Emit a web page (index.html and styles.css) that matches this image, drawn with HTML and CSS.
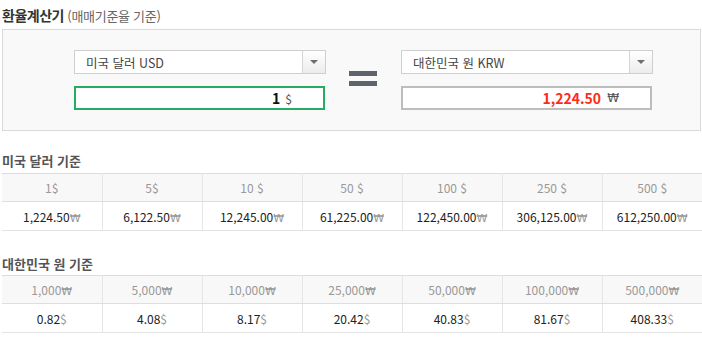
FILE: index.html
```html
<!DOCTYPE html>
<html lang="ko">
<head>
<meta charset="utf-8">
<link rel="stylesheet" href="styles.css">
</head>
<body>
<div class="page">
  <h2 class="title">환율계산기 <span class="sub">(매매기준율 기준)</span></h2>
  <div class="calc">
    <div class="group">
      <div class="select"><span class="sel-text">미국 달러 USD</span><span class="arrow"><i></i></span></div>
      <div class="input active"><span class="val">1</span><span class="unit">$</span></div>
    </div>
    <div class="equals"><i></i><i></i></div>
    <div class="group">
      <div class="select"><span class="sel-text">대한민국 원 KRW</span><span class="arrow"><i></i></span></div>
      <div class="input"><span class="val red">1,224.50</span><span class="unit won">₩</span></div>
    </div>
  </div>

  <h3 class="sec">미국 달러 기준</h3>
  <table class="rates">
    <tr class="head"><td>1$</td><td>5$</td><td>10 $</td><td>50 $</td><td>100 $</td><td>250 $</td><td>500 $</td></tr>
    <tr><td>1,224.50<span class="c w">₩</span></td><td>6,122.50<span class="c w">₩</span></td><td>12,245.00<span class="c w">₩</span></td><td>61,225.00<span class="c w">₩</span></td><td>122,450.00<span class="c w">₩</span></td><td>306,125.00<span class="c w">₩</span></td><td>612,250.00<span class="c w">₩</span></td></tr>
  </table>

  <h3 class="sec sec2">대한민국 원 기준</h3>
  <table class="rates">
    <tr class="head"><td>1,000<span class="w">₩</span></td><td>5,000<span class="w">₩</span></td><td>10,000<span class="w">₩</span></td><td>25,000<span class="w">₩</span></td><td>50,000<span class="w">₩</span></td><td>100,000<span class="w">₩</span></td><td>500,000<span class="w">₩</span></td></tr>
    <tr><td>0.82<span class="c">$</span></td><td>4.08<span class="c">$</span></td><td>8.17<span class="c">$</span></td><td>20.42<span class="c">$</span></td><td>40.83<span class="c">$</span></td><td>81.67<span class="c">$</span></td><td>408.33<span class="c">$</span></td></tr>
  </table>
</div>
</body>
</html>
```
FILE: styles.css
```css
* { box-sizing: border-box; }
body {
  margin: 0;
  background: #fff;
  font-family: "Noto Sans CJK KR", "Noto Sans", sans-serif;
  font-size: 12px;
  color: #222;
}
.page { padding-left: 2px; width: 702px; }
.title {
  margin: 0;
  height: 29px;
  padding-top: 6px;
  font-size: 14px;
  line-height: 18px;
  font-weight: bold;
  color: #333;
  letter-spacing: -0.5px;
}
.title .sub { font-weight: normal; color: #666; font-size: 13px; letter-spacing: -0.3px; }
.calc {
  width: 699px;
  height: 102px;
  border: 1px solid #d9d9d9;
  background: #f9f9f9;
  display: flex;
  padding: 20px 0 0 71px;
}
.group { width: 252px; display: flex; flex-direction: column; gap: 12px; }
.select {
  height: 24px;
  width: 252px;
  background: #fff;
  border: 1px solid #cfcfcf;
  display: flex;
  align-items: center;
}
.sel-text { flex: 1; padding-left: 11px; color: #444; font-size: 12.5px; }
.arrow {
  width: 23px;
  height: 22px;
  border-left: 1px solid #d5d5d5;
  background: linear-gradient(#fff, #ececec);
  display: flex;
  align-items: center;
  justify-content: center;
}
.arrow i {
  width: 0; height: 0;
  border-left: 4px solid transparent;
  border-right: 4px solid transparent;
  border-top: 4px solid #6b6e74;
}
.input {
  height: 24px;
  width: 251px;
  background: #fff;
  border: 2px solid #bdbdbd;
  display: flex;
  align-items: center;
  justify-content: flex-end;
  padding-right: 31px;
}
.input.active { border-color: #25ad64; }
.val { font-weight: bold; font-size: 14px; color: #111; }
.val.red { color: #ff2a1a; }
.unit { color: #555; margin-left: 5px; font-size: 12px; }
.unit.won { margin-left: 6px; font-family: "DejaVu Sans", sans-serif; font-size: 12px; }
.equals {
  width: 28px;
  margin: 21px 24px 0 23px;
  display: flex;
  flex-direction: column;
  gap: 5px;
}
.equals i { display: block; height: 5px; background: #5f646c; }
.sec {
  margin: 0;
  height: 42px;
  padding-top: 21px;
  font-size: 13px;
  line-height: 17px;
  font-weight: bold;
  color: #555;
}
.sec2 { height: 44px; padding-top: 24px; }
.rates {
  width: 700px;
  border-collapse: collapse;
  table-layout: fixed;
  border-top: 1px solid #dcdcdc;
  border-bottom: 1px solid #e3e3e3;
}
.rates td {
  width: 100px;
  text-align: center;
  border-left: 1px solid #e6e6e6;
  height: 29px;
  padding: 0;
  font-size: 12px;
  color: #222;
}
.rates td:first-child { border-left: none; }
.rates .head td {
  background: #f8f8f8;
  color: #999;
  height: 28px;
  border-bottom: 1px solid #dedede;
}
.rates .c { color: #999; }
.rates .w { font-family: "DejaVu Sans", sans-serif; font-size: 11px; }
```
